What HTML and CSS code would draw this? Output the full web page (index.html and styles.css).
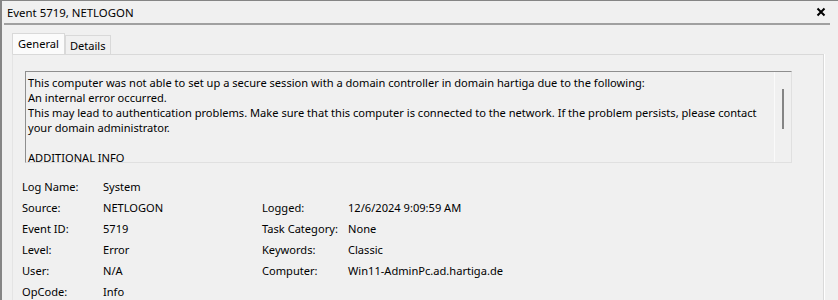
FILE: index.html
```html
<!DOCTYPE html>
<html>
<head>
<meta charset="utf-8">
<link rel="stylesheet" href="styles.css">
</head>
<body>
<div class="window">
  <div class="titlebar">
    <span class="title">Event 5719, NETLOGON</span>
    <svg class="close" width="10" height="10" viewBox="0 0 10 10"><path d="M1.5 1.5 L8.5 8.5 M8.5 1.5 L1.5 8.5" stroke="#000" stroke-width="2" fill="none"/></svg>
  </div>
  <div class="tabs">
    <div class="tab active">General</div>
    <div class="tab">Details</div>
  </div>
  <div class="panel">
    <div class="textbox">
      <div class="text">This computer was not able to set up a secure session with a domain controller in domain hartiga due to the following:<br>An internal error occurred.<br>This may lead to authentication problems. Make sure that this computer is connected to the network. If the problem persists, please contact<br>your domain administrator.<br><br>ADDITIONAL INFO</div>
      <div class="scroll"><div class="thumb"></div></div>
    </div>
    <div class="props">
      <div>Log Name:</div><div>System</div><div></div><div></div>
      <div>Source:</div><div>NETLOGON</div><div>Logged:</div><div>12/6/2024 9:09:59 AM</div>
      <div>Event ID:</div><div>5719</div><div>Task Category:</div><div>None</div>
      <div>Level:</div><div>Error</div><div>Keywords:</div><div>Classic</div>
      <div>User:</div><div>N/A</div><div>Computer:</div><div>Win11-AdminPc.ad.hartiga.de</div>
      <div>OpCode:</div><div>Info</div><div></div><div></div>
    </div>
  </div>
</div>
</body>
</html>
```
FILE: styles.css
```css
html, body {
  margin: 0;
  padding: 0;
  background: #f0f0f0;
  overflow: hidden;
}
body {
  font-family: "Noto Sans", "Open Sans", sans-serif;
  font-size: 11.1px;
  color: #000;
}
.window {
  width: 838px;
  height: 300px;
  box-sizing: border-box;
  border-top: 1px solid #858585;
  border-left: 2px solid #858585;
  overflow: hidden;
}
.titlebar {
  height: 22px;
  margin: 0 8px 0 2px;
  padding: 0 0 0 3px;
  border-bottom: 2px solid #a0a0a0;
  display: flex;
  align-items: center;
  justify-content: space-between;
}
.title {
  font-size: 11.4px;
}
.close {
  margin-right: 4px;
}
.tabs {
  display: flex;
  align-items: flex-end;
  margin: 8px 0 0 10px;
  height: 21px;
}
.tab {
  box-sizing: border-box;
  height: 19px;
  padding: 0 4px 0 4px;
  border: 1px solid #d9d9d9;
  border-bottom: none;
  background: #f0f0f0;
  line-height: 19px;
}
.tab.active {
  height: 21px;
  padding: 0 5px;
  background: #fbfbfb;
  line-height: 20px;
}
.panel {
  margin-left: 10px;
  width: 812px;
  height: 260px;
  border-top: 1px solid #d9d9d9;
  border-left: 1px solid #e4e4e4;
  border-right: 1px solid #d9d9d9;
  box-shadow: 1px 0 0 #fff;
  padding-top: 16px;
  box-sizing: border-box;
}
.textbox {
  margin-left: 12px;
  width: 767px;
  height: 92px;
  box-sizing: border-box;
  border-top: 1px solid #8e8e8e;
  border-left: 1px solid #8e8e8e;
  border-right: 1px solid #e0e0e0;
  border-bottom: 1px solid #e0e0e0;
  display: flex;
  overflow: hidden;
}
.text {
  flex: 1;
  padding: 3px 0 0 2px;
  line-height: 15px;
  white-space: nowrap;
}
.scroll {
  width: 17px;
  border-left: 1px solid #fafafa;
  display: flex;
  justify-content: center;
  padding-top: 17px;
  box-sizing: border-box;
}
.thumb {
  width: 2px;
  height: 40px;
  background: #858585;
}
.props {
  display: grid;
  grid-template-columns: 81px 159px 86px auto;
  grid-auto-rows: 21px;
  align-items: center;
  margin: 13px 0 0 9px;
}
```
